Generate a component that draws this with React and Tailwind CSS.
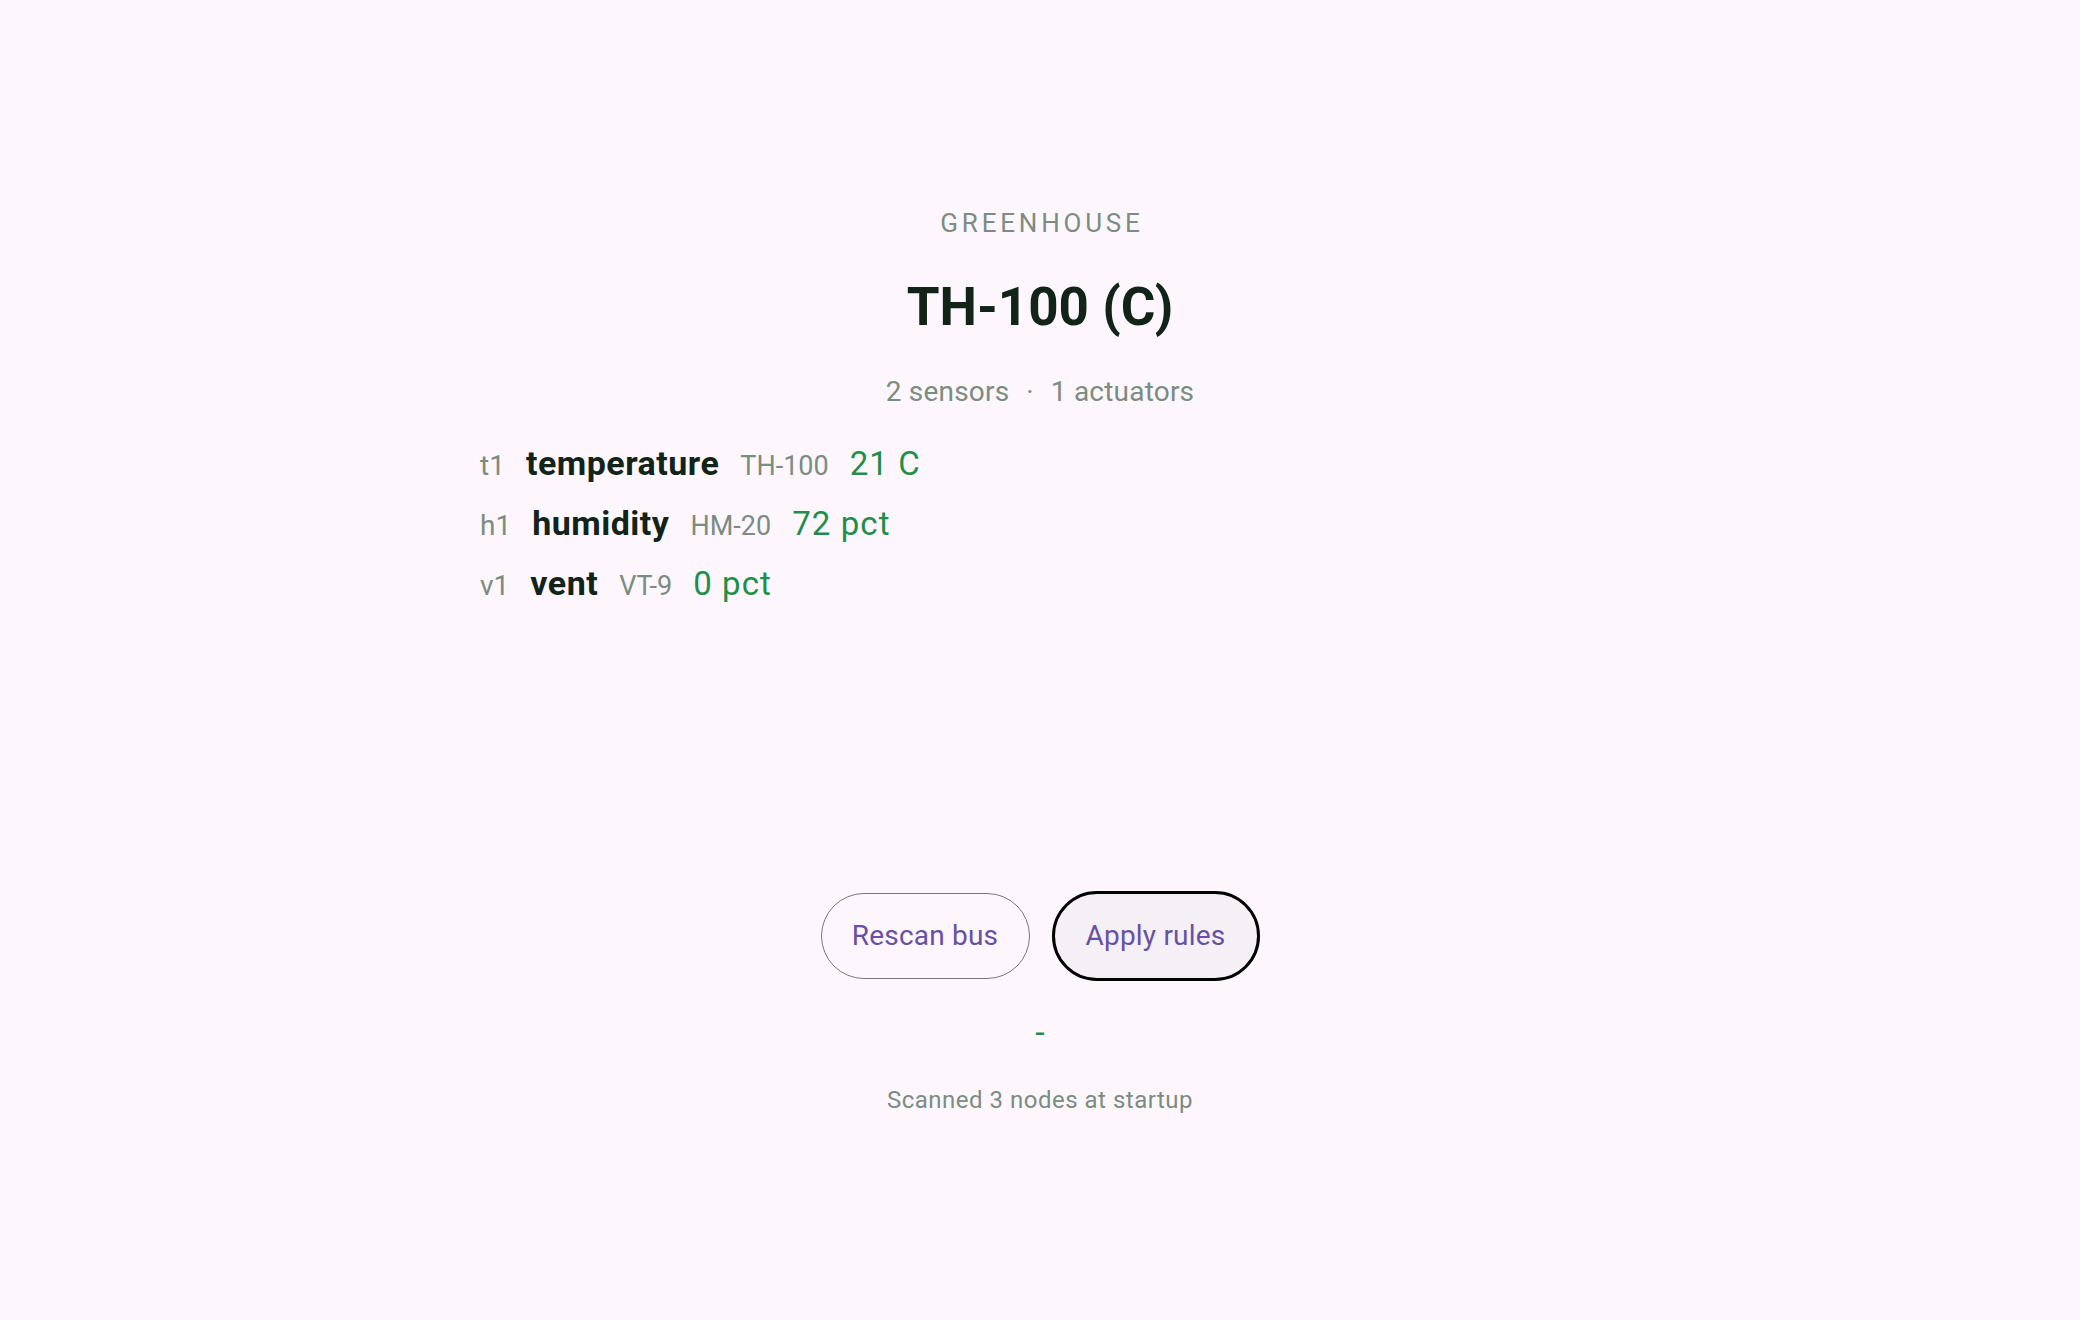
const rows = [
  { id: 't1', name: 'temperature', model: 'TH-100', value: '21 C' },
  { id: 'h1', name: 'humidity', model: 'HM-20', value: '72 pct' },
  { id: 'v1', name: 'vent', model: 'VT-9', value: '0 pct' },
];

const App = () => {
  return (
    <div className="min-h-screen w-full bg-[#fdf7fd] font-['Roboto',sans-serif] flex flex-col items-center">
      <div className="w-[1120px] flex flex-col items-center pt-[204px]">
        <div className="text-[26px] leading-[38px] tracking-[3.8px] text-[#7b8c80] pl-[4px]">GREENHOUSE</div>
        <h1 className="mt-[33px] text-[53px] leading-[64px] font-bold text-[#12231a]">TH-100 (C)</h1>
        <div className="mt-[35px] flex items-center gap-[17px] text-[28px] leading-[36px] tracking-[0.2px] text-[#7b8c80]">
          <span>2 sensors</span>
          <span>·</span>
          <span>1 actuators</span>
        </div>
        <div className="self-stretch mt-[23px] flex flex-col">
          {rows.map((r) => (
            <div key={r.id} className="flex items-baseline gap-[21px] h-[60px] leading-[60px]">
              <span className="text-[28px] text-[#7b8c80]">{r.id}</span>
              <span className="text-[34px] font-bold tracking-[0.5px] text-[#12231a]">{r.name}</span>
              <span className="text-[27px] text-[#7b8c80]">{r.model}</span>
              <span className="text-[33px] tracking-[1.1px] text-[#1e8e4a]">{r.value}</span>
            </div>
          ))}
        </div>
        <div className="mt-[278px] flex items-center gap-[22px]">
          <button
            type="button"
            className="w-[209px] h-[86px] flex items-center justify-center rounded-full border-[1.5px] border-[#79747e] bg-transparent text-[28px] tracking-[0.2px] text-[#6750a4]">
            Rescan bus
          </button>
          <button
            type="button"
            className="w-[208px] h-[90px] flex items-center justify-center rounded-full border-[3px] border-black bg-[#f4f0f6] text-[28px] tracking-[0.2px] text-[#6750a4]">
            Apply rules
          </button>
        </div>
        <div className="mt-[31px] text-[34px] leading-[40px] text-[#1e8e4a]">-</div>
        <div className="mt-[32px] text-[24px] leading-[32px] tracking-[0.5px] text-[#7b8c80]">Scanned 3 nodes at startup</div>
      </div>
    </div>
  );
};

export default App;
